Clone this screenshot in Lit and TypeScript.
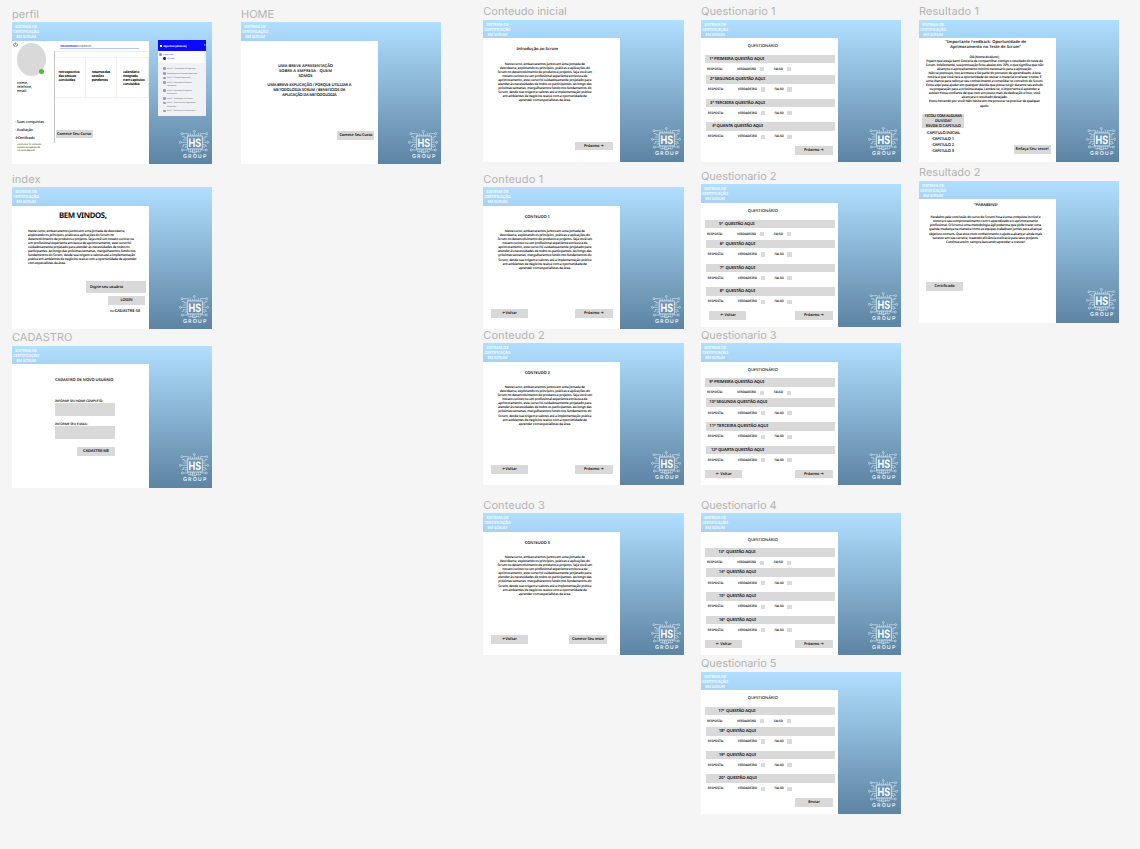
import { LitElement, html, css, svg, TemplateResult } from "lit";
import { customElement, property } from "lit/decorators.js";

type Line = [string, number];

/** One line of text, tracked so that it occupies exactly `w` pixels. */
@customElement("fit-text")
class FitText extends LitElement {
  @property() text = "";
  @property({ type: Number }) w = 0;
  static styles = css`
    :host { display: inline-block; white-space: pre; vertical-align: top; flex: none; margin: 1px 0 -1px; }
  `;
  render() {
    return html`<span>${this.text}</span>`;
  }
  updated() {
    const span = this.renderRoot.querySelector("span") as HTMLElement;
    span.style.letterSpacing = "0";
    const natural = span.getBoundingClientRect().width;
    span.style.letterSpacing = `${(this.w - natural) / this.text.length}px`;
  }
}

const t = (text: string, w: number) => html`<fit-text .text=${text} .w=${w}></fit-text>`;
const lines = (ls: Line[]) => ls.map(([s, w]) => html`<div class="line">${t(s, w)}</div>`);
const btn = (text: string, w: number, cls = "") => html`<div class="btn ${cls}">${t(text, w)}</div>`;

const nodes = [[46, 4], [9, 11], [83, 11], [4, 37], [86, 37], [10, 60], [82, 60]];
const logo = html`<svg class="logo" viewBox="0 0 90 88">
  <g fill="none" stroke="#e4f0f8" stroke-width="2" opacity=".85">
    ${nodes.map(([x, y]) => svg`<circle cx=${x} cy=${y} r="3" />`)}
    <path d="M46 7V18M12 11H28V18M80 11H64V18M34 18V9M40 18V12M52 18V12M58 18V8M7 37H25M83 37H70M13 60H28V56M79 60H64V56M25 24H16V20H9M25 30H12M70 24H78V20H85M70 30H79M25 44H13V49H8M25 50H19V54M70 44H79V49H84M70 50H76V54M34 57V65H42V58M40 57V68H52V58M58 57V65H50M46 57V70M29 62V66H36M64 62V66H57" />
    <rect x="25" y="18" width="45" height="39" stroke-width="2.6" />
  </g>
  <text class="hs" x="28.5" y="50" textLength="38" lengthAdjust="spacingAndGlyphs">HS</text>
  <text class="group" x="12" y="85" textLength="70">GROUP</text>
</svg>`;

const courseText: Line[] = [
  ["Neste curso, embarcaremos juntos em uma jornada de", 80],
  ["descoberta, explorando os princípios, práticas e aplicações do", 90],
  ["Scrum no desenvolvimento de produtos e projetos. Seja você um", 94.7],
  ["novato curioso ou um profissional experiente em busca de", 85],
  ["aprimoramento, este curso foi cuidadosamente projetado para", 93],
  ["atender às necessidades de todos os participantes. Ao longo das", 93.5],
  ["próximas semanas, mergulharemos fundo nos fundamentos do", 93],
  ["Scrum, desde sua origem e valores até a implementação prática", 93],
  ["em ambientes de negócios reais e com a oportunidade de", 84],
  ["aprender com especialistas da área.", 52],
];

const content = (title: string, tw: number, back: boolean, next: TemplateResult) => html`
  <div class="content">
    <div class="title">${t(title, tw)}</div>
    <div class="para">${lines(courseText)}</div>
    <div class="actions ${back ? "" : "end"}">${back ? btn("←Voltar", 15) : ""}${next}</div>
  </div>`;

const quiz = (qs: [string, number, number][], actions: TemplateResult) => html`
  <div class="quiz">
    <div class="qtitle">${t("QUESTIONÁRIO", 30)}</div>
    ${qs.map(
      ([q, x, w]) => html`<div class="question">
        <div class="bar" style="padding-left:${x}px">${t(q, w)}</div>
        <div class="answers">
          <span class="resp">${t("RESPOSTA:", 15.7)}</span>
          <span class="opt true">${t("VERDADEIRO", 19)}<i></i></span>
          <span class="opt">${t("FALSO", 9)}<i></i></span>
        </div>
      </div>`
    )}
    ${actions}
  </div>`;

const nextBtn = btn("Próximo →", 20);
const noBack = (b: TemplateResult) => html`<div class="actions end">${b}</div>`;
const withBack = (cls = "") => html`<div class="actions ${cls}">${btn("← Voltar", 16)}${nextBtn}</div>`;

const lessons: [string, string?][] = [
  ["Aula 01 - Introdução ao Algoritmo"],
  ["Exemplos para o Curso de Algoritmos"],
  ["Aula 2 - Primeiro Algoritmo"],
  ["Aula 3 - Comando de Entrada e", "Operadores"],
  ["Aula 4 - Operadores Lógicos e", "Relacionais"],
  ["Aula 5 - Introdução ao Scratch"],
  ["Aula 6 - Exercícios de Algoritmos", "Resolvidos"],
  ["Aula 7 - Estruturas Condicionais 1"],
];

const profile = html`
  <div class="profile">
    <div class="side">
      <svg class="power" viewBox="0 0 12 12" fill="none" stroke="#333" stroke-width="1.3"><path d="M3.5 2.7A4.6 4.6 0 1 0 8.5 2.7M6 0.5V6" /></svg>
      <div class="avatar"><b></b></div>
      <div class="who">${lines([["nome,", 11], ["telefone,", 15], ["email", 9]])}</div>
      <div class="links">${lines([["· Suas conquistas", 29], ["· Avaliação", 18], ["⤓Certificado", 19.5]])}</div>
      <div class="note">${lines([["conforme for obtendo", 24], ["sucesso nos capitulos ele", 22.5], ["vai sendo liberado", 17.5]])}</div>
    </div>
    <div class="main">
      <div class="tabs"><span class="on">${t("EM CONTEUDO", 17)}</span><span>${t("O QUE FALTA", 13)}</span></div>
      <div class="cards">
        <div>${lines([["retrospectiva", 21], ["das sessoes", 17.5], ["concluidas", 16.5]])}</div>
        <div>${lines([["resumos das", 18], ["sessões", 12], ["pendentes", 16]])}</div>
        <div>${lines([["calendario", 16], ["integrado", 14.5], ["nem capitulos", 21.5], ["concluidos.", 17]])}</div>
      </div>
      ${btn("Comece Seu Curso", 34)}
    </div>
  </div>`;

const phone = html`
  <div class="phone">
    <div class="phead"><i></i>${t("Algoritmo [40 Horas]", 23)}<s>‹</s></div>
    <div class="ptop"><div><i></i>${t("Algoritmo", 10)}</div><div class="sub"><i></i>${t("40 Aulas", 7)}</div></div>
    <div class="plist">
      ${lessons.map(([a, b]) => html`<div class="les"><i></i><div><div>${t(a, a.length * 0.86)}</div>${b ? html`<div>${t(b, b.length * 0.9)}</div>` : ""}</div></div>`)}
    </div>
  </div>`;

const home = html`
  <div class="home">
    <div class="intro">${lines([["UMA BREVE APRESENTAÇÃO", 55], ["SOBRE A EMPRESA - QUEM", 53], ["SOMOS", 14]])}</div>
    <div class="about">${lines([["UMA BREVE EXPLICAÇÃO / PORQUE UTILIZAR A", 84], ["METODOLOGIA SCRUM / BENEFICIOS DA", 72], ["APLICAÇÃO DA METODOLOGIA", 54]])}</div>
    ${btn("Comece Seu Curso", 33)}
  </div>`;

const index = html`
  <div class="index">
    <div class="welcome">${t("BEM VINDOS,", 47.5)}</div>
    <div class="para">${lines([
      ["Neste curso, embarcaremos juntos em uma jornada de descoberta,", 97],
      ["explorando os princípios, práticas e aplicações do Scrum no", 86],
      ["desenvolvimento de produtos e projetos. Seja você um novato curioso ou", 106],
      ["um profissional experiente em busca de aprimoramento, este curso foi", 103],
      ["cuidadosamente projetado para atender às necessidades de todos os", 101.5],
      ["participantes. Ao longo das próximas semanas, mergulharemos fundo nos", 107.5],
      ["fundamentos do Scrum, desde sua origem e valores até a implementação", 107],
      ["prática em ambientes de negócios reais e com a oportunidade de aprender", 108.5],
      ["com especialistas da área.", 37.5],
    ])}</div>
    <div class="field">${t("Digite seu usuário", 33)}</div>
    ${btn("LOGIN", 12)}
    <div class="join"><span>${t("ou", 4)}</span>${t("CADASTRE-SE", 25.5)}</div>
  </div>`;

const signup = html`
  <div class="signup">
    <div class="title">${t("CADASTRO DE NOVO USUÁRIO", 58.3)}</div>
    <div class="label">${t("INFORME SEU NOME COMPLETO:", 48)}</div>
    <div class="field"></div>
    <div class="label">${t("INFORME SEU E-MAIL:", 33)}</div>
    <div class="field"></div>
    ${btn("CADASTRE-ME", 26)}
  </div>`;

const result1 = html`
  <div class="result">
    <div class="rtitle">${lines([['"Importante Feedback: Oportunidade de', 81], ['Aprimoramento no Teste de Scrum"', 71]])}</div>
    <div class="para">${lines([
      ["Olá [Nome do Aluno],", 30],
      ["Espero que esteja bem! Gostaria de compartilhar contigo o resultado do teste de", 116.5],
      ["Scrum. Infelizmente, sua pontuação ficou abaixo dos 70%, o que significa que não", 117.5],
      ["alcançou o aproveitamento mínimo necessário para a aprovação.", 95],
      ["Não se preocupe, isso acontece e faz parte do processo de aprendizado. A boa", 112],
      ["notícia é que você terá a oportunidade de revisar o material e refazer o teste. É", 114],
      ["uma chance para reforçar seu conhecimento e consolidar os conceitos do Scrum.", 117],
      ["Estou aqui para ajudar em qualquer dúvida que possa surgir durante seu estudo", 117],
      ["ou preparação para a próxima etapa. Lembre-se, o importante é aprender e", 110],
      ["evoluir. Estou confiante de que com um pouco mais de dedicação e foco, você", 111],
      ["alcançará o resultado desejado.", 46],
      ["Estou torcendo por você! Não hesite em me procurar se precisar de qualquer", 111],
      ["apoio.", 9],
    ])}</div>
    <div class="bottom">
      <div>
        <div class="doubt">${lines([["FICOU COM ALGUMA", 37], ["DUVIDA?", 16.5], ["REVISE O CAPITULO", 35]])}</div>
        <div class="chapters">${lines([["-CAPITULO INICIAL", 34], ["-CAPITULO 1", 22.5], ["-CAPITULO 2", 22.5], ["-CAPITULO 3", 22.5]])}</div>
      </div>
      ${btn("Refaça Seu teste!", 33)}
    </div>
  </div>`;

const result2 = html`
  <div class="result two">
    <div class="rtitle">${lines([['"PARABENS!', 24]])}</div>
    <div class="para">${lines([
      ["Parabéns pela conclusão do curso de Scrum! Essa é uma conquista incrível e", 110],
      ["mostra o seu comprometimento com o aprendizado e o aprimoramento", 105],
      ["profissional. O Scrum é uma metodologia ágil poderosa que pode trazer uma", 111],
      ["grande mudança na maneira como as equipes trabalham juntas para alcançar", 113],
      ["objetivos comuns. Que esse novo conhecimento o ajude a alcançar ainda mais", 113],
      ["sucesso em sua carreira, trazendo eficiência e eficácia para seus projetos.", 106],
      ["Continue assim, sempre buscando aprender e crescer!", 79],
    ])}</div>
    ${btn("Certificado", 20)}
  </div>`;

interface Frame { name: string; w: number; x: number; y: number; body: TemplateResult; aside?: TemplateResult }

const frames: Frame[] = [
  { name: "perfil", w: 27, x: 12, y: 22, body: profile, aside: phone },
  { name: "HOME", w: 33, x: 241, y: 22, body: home },
  { name: "index", w: 28.5, x: 12, y: 187, body: index },
  { name: "CADASTRO", w: 60.5, x: 12, y: 345.5, body: signup },
  { name: "Conteudo inicial", w: 83.5, x: 483.3, y: 19.5, body: content("Introdução ao Scrum", 41.7, false, nextBtn) },
  { name: "Conteudo 1", w: 60, x: 483.3, y: 187, body: content("CONTEUDO 1", 25, true, nextBtn) },
  { name: "Conteudo 2", w: 61.5, x: 483.3, y: 343, body: content("CONTEUDO 2", 25, true, nextBtn) },
  { name: "Conteudo 3", w: 61.5, x: 483.3, y: 513, body: content("CONTEUDO 3", 25, true, btn("Comece Seu teste", 32, "shift")) },
  { name: "Questionario 1", w: 74.5, x: 701, y: 19.5, body: quiz([["1ª PRIMEIRA QUESTÃO AQUI", 4.3, 55], ["2ª SEGUNDA QUESTÃO AQUI", 4.3, 55], ["3ª TERCEIRA QUESTÃO AQUI", 4.3, 55], ["4ª QUANTA QUESTÃO AQUI", 6.2, 51]], noBack(nextBtn)) },
  { name: "Questionario 2", w: 75.5, x: 701, y: 184.4, body: quiz([["5ª  QUESTÃO AQUI", 14, 35.5], ["6ª  QUESTÃO AQUI", 14, 35.5], ["7ª  QUESTÃO AQUI", 14, 35.5], ["8ª  QUESTÃO AQUI", 14, 35.5]], withBack("in")) },
  { name: "Questionario 3", w: 75.5, x: 701, y: 343, body: quiz([["9ª PRIMEIRA QUESTÃO AQUI", 4.3, 55], ["10ª SEGUNDA QUESTÃO AQUI", 3.5, 58], ["11ª TERCEIRA QUESTÃO AQUI", 3.5, 59], ["12ª QUARTA QUESTÃO AQUI", 5.3, 53]], withBack()) },
  { name: "Questionario 4", w: 75.5, x: 701, y: 513, body: quiz([["13ª  QUESTÃO AQUI", 13.3, 37], ["14ª  QUESTÃO AQUI", 13, 37], ["15ª  QUESTÃO AQUI", 13, 37], ["16ª  QUESTÃO AQUI", 13, 37]], withBack()) },
  { name: "Questionario 5", w: 75.5, x: 701, y: 671.5, body: quiz([["17ª  QUESTÃO AQUI", 13.3, 37], ["18ª  QUESTÃO AQUI", 13, 37], ["19ª  QUESTÃO AQUI", 13, 37], ["20ª  QUESTÃO AQUI", 13, 38]], noBack(btn("Enviar", 11.7))) },
  { name: "Resultado 1", w: 60, x: 919, y: 19.5, body: result1 },
  { name: "Resultado 2", w: 61.5, x: 919, y: 180.5, body: result2 },
];

@customElement("app-root")
class AppRoot extends LitElement {
  static styles = css`
    :host { display: block; position: relative; width: 1140px; height: 849px; overflow: hidden; background: #f5f5f5; font-family: "Noto Sans", Inter, sans-serif; font-weight: 600; color: #111; text-rendering: geometricPrecision; }
    * { box-sizing: border-box; }
    .frame { position: absolute; width: 200.3px; }
    .name { height: 15px; margin-top: -15px; font: 400 11px/14px Inter, sans-serif; color: #b3b3b3; }
    .name fit-text { margin: -.4px 0 0; }
    .art { display: grid; grid-template: 18.5px 123.9px / 136.7px 1fr; background: linear-gradient(#b1dfff, #5d84a2); }
    .head { width: 28px; padding-top: 2px; text-align: center; color: #fff; opacity: .9; font-size: 4.1px; }
    .head .line { line-height: 5px; }
    .panel { grid-column: 1; background: #fff; overflow: hidden; }
    .aside { grid-column: 2; grid-row: 1 / 3; display: flex; flex-direction: column; }
    .logo { display: block; width: 30px; height: 29.3px; margin: auto 0 5.3px 30.6px; }
    .hs { font: 700 35px Inter, sans-serif; fill: #fff; }
    .group { font: 600 16px Inter, sans-serif; fill: #e8f2f9; }
    .line { line-height: 4.06px; }
    .btn { width: 37.2px; height: 8.8px; background: #d9d9d9; font-size: 3.9px; line-height: 8.6px; text-align: center; }
    .para { font-size: 3.3px; font-weight: 600; }
    .field { background: #d9d9d9; }
    .actions { display: flex; justify-content: space-between; }
    .actions.end { justify-content: flex-end; }

    .content { padding: 8.3px 7.4px 0 7.5px; text-align: center; }
    .content .title { width: 93px; font-size: 4px; line-height: 5px; }
    .content .para { width: 108px; margin-top: 9.3px; }
    .content .actions { margin-top: 40.3px; }
    .content .shift { margin-right: 6px; }

    .quiz { padding: 5px 3px 0 4px; }
    .qtitle { padding-left: 42.8px; font-size: 4px; line-height: 5px; font-weight: 500; height: 11.7px; }
    .bar { width: 129.7px; height: 8.6px; background: #d9d9d9; font-size: 4.2px; line-height: 8.4px; }
    .question { height: 23.7px; }
    .question:nth-child(2) { height: 20.3px; }
    .question:nth-child(n + 3) { margin-left: .8px; }
    .answers { display: flex; align-items: center; height: 5px; margin-top: 3.4px; padding-left: 2px; font-size: 3.2px; line-height: 5px; }
    .answers fit-text { margin: .1px 0 -.1px; }
    .resp { width: 30px; }
    .opt { display: flex; align-items: center; gap: 3.8px; }
    .opt i { width: 4.3px; height: 4.3px; background: #d9d9d9; }
    .opt.true { width: 36.8px; }
    .quiz .actions { width: 127.6px; }
    .quiz .actions.in { padding-left: 4.3px; }

    .home { padding-top: 22.7px; font-size: 4px; text-align: center; }
    .home .line { line-height: 5px; }
    .intro { width: 129px; }
    .about { margin-top: 4.3px; }
    .home .btn { margin: 33.8px 0 0 96.3px; }

    .index { padding-left: 16px; }
    .welcome { padding: 4.3px 0 0 31px; font-size: 7.8px; line-height: 11px; font-weight: 700; }
    .index .para { margin-top: 7.2px; }
    .index .field { width: 59.4px; height: 12.2px; margin: 16.5px 0 0 58.3px; padding-left: 3.7px; font-size: 3.9px; line-height: 12.4px; }
    .index .btn { margin: 2.8px 0 0 80px; }
    .join { display: flex; gap: .7px; margin: 2.7px 0 0 82px; font-size: 3.9px; line-height: 5px; }
    .join span { font-weight: 400; }

    .signup { padding: 12.5px 0 0 43px; font-size: 4px; }
    .signup .title { line-height: 5px; }
    .signup .label { margin-top: 16.8px; height: 4.7px; font-size: 3.3px; line-height: 4px; }
    .signup .field { width: 60px; height: 12.7px; }
    .signup .field + .label { margin-top: 5.6px; }
    .signup .btn { width: 38px; margin: 8.3px 0 0 22px; }

    .result { padding-top: 1.2px; text-align: center; }
    .rtitle { padding-right: 3.3px; font-size: 4px; }
    .rtitle .line { line-height: 5px; }
    .result .para { width: 131px; margin-top: 4.6px; }
    .bottom { display: flex; justify-content: space-between; padding: 7.2px 5px 0 3.3px; text-align: left; font-size: 4px; }
    .bottom .btn { margin-top: 31.3px; }
    .doubt { width: 42px; height: 14.3px; background: #d9d9d9; text-align: center; }
    .doubt .line { line-height: 4.9px; }
    .chapters { padding: 1.6px 0 0 9px; }
    .chapters .line { line-height: 6.2px; }
    .chapters .line:first-child { margin-left: -5.3px; }
    .two { padding-top: 3.2px; }
    .two .para { width: 133px; margin-top: 7.1px; }
    .two .btn { margin: 39.5px 0 0 7px; }

    .profile { display: flex; height: 124px; }
    .side { width: 41.5px; padding: 1px 0 0 1px; }
    .power { display: block; width: 5px; height: 5px; }
    .avatar { display: flex; justify-content: flex-end; align-items: flex-end; width: 29px; height: 33px; margin: -3.8px 0 0 4px; background: #d9d9d9; border-radius: 50%; padding: 0 2.2px 2px 0; }
    .avatar b { width: 5px; height: 5px; border-radius: 50%; background: #56b91c; }
    .who { margin: 4.8px 0 0 4px; font-size: 3.7px; font-weight: 500; }
    .who .line { line-height: 4.2px; }
    .links { margin: 25.3px 0 0 2px; font-size: 3.8px; font-weight: 500; }
    .links .line { line-height: 7.8px; }
    .note { margin: 1.7px 0 0 4.3px; font-size: 2.3px; color: #626b3b; }
    .note .line { line-height: 2.85px; }
    .main { flex: 1; height: 92.3px; margin-top: 10px; border-left: .8px solid #c4c4c8; }
    .tabs { display: flex; gap: 1px; width: 79px; height: 5.7px; margin: -7.7px 0 0 5.8px; border-bottom: 1px solid #b9c6ee; font-size: 2.9px; line-height: 4.4px; font-weight: 400; color: #555; }
    .tabs .on { color: #2626f0; font-weight: 600; }
    .cards { display: grid; grid-template-columns: 31.3px 31.3px 1fr; height: 46.5px; margin-top: 2.5px; padding-top: 5px; border-top: 1px solid #ececf2; font-size: 3.5px; font-weight: 700; }
    .cards > div { border: 1px solid #f0f0f0; border-left: 0; padding: 11.6px 0 0 4px; }
    .cards > div + div { padding-left: 6px; }
    .cards .line { line-height: 4.2px; }
    .main .btn { margin: 32px 0 0 1px; }

    .phone { width: 48px; height: 75.3px; margin: 18.3px 0 0 9.3px; background: #eff1f5; overflow: hidden; font-size: 1.8px; color: #777; font-weight: 500; }
    .phone fit-text { margin: 0; }
    .phead { display: flex; align-items: center; gap: 1.6px; height: 10.7px; padding: 0 .5px 0 2px; background: #0a0aff; color: #fff; font-size: 2.5px; line-height: 4px; font-weight: 700; }
    .phead i { width: 1.8px; height: 2.2px; background: #fff; }
    .phead s { margin-left: auto; text-decoration: none; font-size: 4px; }
    .ptop { height: 11.7px; width: 46.5px; padding: 1.4px 0 0 1.4px; background: #fff; color: #3a3ae0; }
    .ptop div { display: flex; gap: 1.4px; align-items: center; height: 4px; line-height: 3px; }
    .ptop .sub { padding-left: 4px; }
    .ptop i, .les i { flex: none; width: 2.6px; height: 2.6px; background: #8b93f3; border-radius: 50%; }
    .ptop .sub i { background: #1414f0; }
    .plist { display: flex; flex-direction: column; gap: 1.5px; width: 46.5px; height: 53px; padding: 4.2px 0 0 5.3px; }
    .les { display: flex; gap: 1.2px; line-height: 3.2px; flex: none; }
    .les i { margin-top: .4px; }
  `;

  render() {
    return frames.map(
      (f) => html`<section class="frame" style="left:${f.x}px;top:${f.y}px">
        <div class="name">${t(f.name, f.w)}</div>
        <div class="art">
          <div class="head">${lines([["SISTEMA DE", 22], ["CERTIFICAÇÃO", 26], ["EM SCRUM", 19.5]])}</div>
          <div class="panel">${f.body}</div>
          <div class="aside">${f.aside ?? ""}${logo}</div>
        </div>
      </section>`
    );
  }
}
